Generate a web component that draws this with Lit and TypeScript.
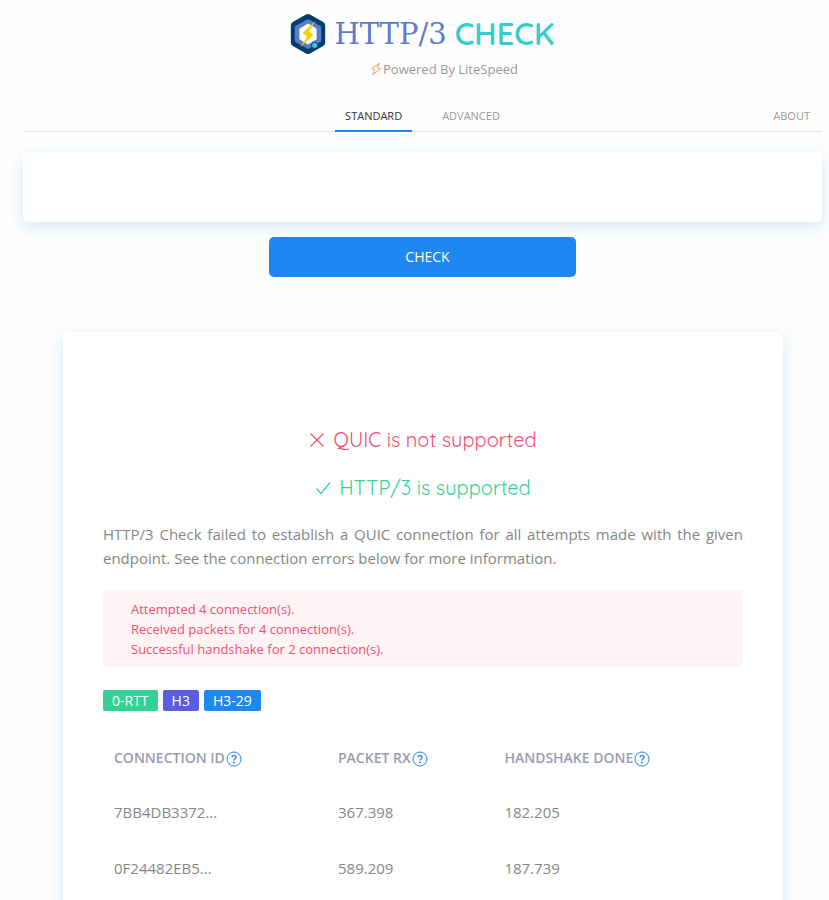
import { LitElement, html, css, svg } from "lit";
import { customElement, state } from "lit/decorators.js";

interface Connection {
  id: string;
  packetRx: string;
  handshake: string;
}

const COLUMNS = ["Connection ID", "Packet RX", "Handshake Done"];

const CONNECTIONS: Connection[] = [
  { id: "7BB4DB3372...", packetRx: "367.398", handshake: "182.205" },
  { id: "0F24482EB5...", packetRx: "589.209", handshake: "187.739" },
];

const logo = svg`
  <svg class="logo" viewBox="0 0 36 40" aria-hidden="true">
    <path fill="#003e6b" d="M16 .6q2-1 4 0l13.200 7.400q2 1.200 2 3.400v17.200q0 2.200-2 3.400l-13.200 7.400q-2 1-4 0l-13.200-7.400q-2-1.200-2-3.400v-17.200q0-2.200 2-3.400z"/>
    <path fill="#5c7ccb" d="M17 5.500q1-.6 2 0l11 6.200q1.200.7 1.200 2v12.600q0 1.300-1.200 2l-11 6.200q-1 .6-2 0l-11-6.200q-1.200-.7-1.200-2v-12.600q0-1.300 1.200-2z"/>
    <path fill="#fff" d="M18 9.500l8.600 5.200v10.600l-8.600 5.200l-8.600-5.200v-10.600z"/>
    <path fill="#fc0" d="M25.500 6.800L12.500 19.200l4.600 3.200L10.200 33.200l13.400-12.400l-4.600-3.200z"/>
    <circle cx="24.700" cy="31.300" r="3.200" fill="#34cdce" stroke="#003e6b"/>
  </svg>`;

const bolt = svg`
  <svg class="bolt" viewBox="0 0 12 14" aria-hidden="true">
    <path d="M9.500 1.200L1.500 7L4.800 8L2.500 12.800L10.500 6.800L7.200 5.800z" />
  </svg>`;

@customElement("app-root")
export class AppRoot extends LitElement {
  @state() private host = "";

  static styles = css`
    :host {
      display: block;
      min-height: 100vh;
      box-sizing: border-box;
      padding: 12px 7px 0 23px;
      background: #fefefe;
      color: #868686;
      font-family: "Open Sans", "Noto Sans", sans-serif;
      font-size: 15px;
      line-height: 24px;
    }
    * {
      box-sizing: border-box;
    }
    a {
      color: inherit;
      text-decoration: none;
    }
    .brand {
      display: flex;
      justify-content: center;
      align-items: center;
      gap: 8px;
      margin: 0;
      height: 44px;
      font-weight: 400;
      line-height: 44px;
    }
    .logo {
      width: 36px;
      height: 40px;
    }
    .http {
      color: #5c7ccb;
      font-family: "DejaVu Serif", serif;
      font-size: 29px;
    }
    .check-word {
      color: #34cdce;
      font-family: Quicksand, Lato, sans-serif;
      font-size: 31px;
      font-weight: 600;
    }
    .powered {
      display: flex;
      justify-content: center;
      align-items: center;
      margin: 1px 0 0;
      padding: 0 0 0 43px;
      font-size: 13px;
      color: #999;
    }
    .powered a {
      display: flex;
      align-items: center;
      gap: 1px;
    }
    .bolt {
      width: 12px;
      height: 14px;
      fill: none;
      stroke: #ff9b6a;
      stroke-width: 1;
      stroke-linejoin: round;
    }
    .tabs {
      display: grid;
      grid-template-columns: 1fr auto 1fr;
      margin-top: 18px;
      border-bottom: 1px solid #d3e5ef;
      font-size: 11px;
      line-height: 34px;
      color: #999;
    }
    .views {
      grid-column: 2;
      display: flex;
      gap: 20px;
    }
    .tab,
    .about {
      height: 32px;
      padding: 0 10px;
    }
    .tab.current {
      height: 33px;
      margin-bottom: -1px;
      color: #333;
      border-bottom: 2px solid #1e87f0;
    }
    .about {
      justify-self: end;
      padding: 0 12px;
    }
    .search {
      display: flex;
      flex-direction: column;
      align-items: center;
      gap: 15px;
      margin-top: 20px;
    }
    .field {
      width: 100%;
      padding: 15px 20px;
      background: #fff;
      border-radius: 5px;
      box-shadow: 0 5px 15px rgba(20, 130, 190, 0.18);
    }
    .host {
      display: block;
      width: 100%;
      height: 40px;
      border: 0;
      outline: 0;
      background: transparent;
      font: inherit;
      color: inherit;
      text-align: center;
    }
    .submit {
      width: 307px;
      max-width: 100%;
      height: 40px;
      padding: 0 0 0 10px;
      border: 0;
      border-radius: 5px;
      background: #1e87f0;
      color: #fff;
      font: inherit;
      font-size: 14px;
    }
    .result {
      margin: 55px 39px 0 40px;
      padding: 94px 40px 40px;
      background: #fff;
      border-radius: 5px;
      box-shadow: 0 5px 15px rgba(20, 130, 190, 0.18);
    }
    .status {
      display: flex;
      justify-content: center;
      align-items: center;
      gap: 8px;
      margin: 0 0 20px;
      font-family: Quicksand, Lato, sans-serif;
      font-size: 20px;
      font-weight: 400;
      line-height: 28px;
      height: 28px;
    }
    .mark {
      width: 16px;
      height: 16px;
      fill: none;
      stroke: currentColor;
      stroke-width: 1.2;
    }
    .bad {
      color: #f0506e;
    }
    .good {
      color: #32d296;
    }
    .note {
      margin: 0;
      text-align: justify;
    }
    .errors {
      list-style: none;
      margin: 20px 0 23px;
      padding: 9px 28px 8px;
      border-radius: 4px;
      background: #fef4f6;
      color: #f0506e;
      font-size: 13px;
      line-height: 20px;
    }
    .labels {
      display: flex;
      gap: 5px;
      font-size: 14px;
      line-height: 21px;
      color: #fff;
    }
    .label {
      padding: 0 9px;
      border-radius: 2px;
    }
    .green {
      background: #32d296;
    }
    .purple {
      background: #5c5cde;
    }
    .blue {
      background: #1e87f0;
    }
    table {
      width: 100%;
      margin-top: 19px;
      border-collapse: collapse;
      table-layout: fixed;
    }
    .col-id {
      width: 35%;
    }
    .col-rx {
      width: 26%;
    }
    th,
    td {
      padding: 16px 11px;
      text-align: left;
    }
    th {
      padding-bottom: 14px;
      color: #9a9ab5;
      font-size: 14px;
      font-weight: 600;
      text-transform: uppercase;
    }
    .heading {
      display: flex;
      align-items: center;
      gap: 1px;
    }
    .help {
      display: flex;
      padding: 2px 0 0;
      border: 0;
      background: none;
      color: #1e87f0;
    }
    .help svg {
      width: 16px;
      height: 16px;
      fill: none;
      stroke: currentColor;
    }
    .help .hook {
      stroke-width: 1.4;
    }
    .help .dot {
      fill: currentColor;
      stroke: none;
    }
  `;

  private onInput(e: Event) {
    this.host = (e.target as HTMLInputElement).value;
  }

  render() {
    return html`
      <header>
        <h1 class="brand">
          ${logo}
          <span class="http">HTTP/3</span>
          <span class="check-word">CHECK</span>
        </h1>
        <p class="powered"><a href="#litespeed">${bolt}<span>Powered By LiteSpeed</span></a></p>
      </header>
      <nav class="tabs">
        <div class="views">
          <a class="tab current" href="#standard">STANDARD</a>
          <a class="tab" href="#advanced">ADVANCED</a>
        </div>
        <a class="about" href="#about">ABOUT</a>
      </nav>
      <main>
        <form class="search" @submit=${(e: Event) => e.preventDefault()}>
          <div class="field">
            <input class="host" type="text" aria-label="Host" .value=${this.host} @input=${this.onInput} />
          </div>
          <button class="submit" type="submit">CHECK</button>
        </form>
        <section class="result">
          <h2 class="status bad">
            <svg class="mark" viewBox="0 0 16 16" aria-hidden="true"><path d="M1.500 1.500l13 13M14.500 1.500l-13 13" /></svg>
            <span>QUIC is not supported</span>
          </h2>
          <h2 class="status good">
            <svg class="mark" viewBox="0 0 16 16" aria-hidden="true"><path d="M1.500 8.500l4.500 5L15 2.500" /></svg>
            <span>HTTP/3 is supported</span>
          </h2>
          <p class="note">
            HTTP/3 Check failed to establish a QUIC connection for all attempts made with the given endpoint. See the
            connection errors below for more information.
          </p>
          <ul class="errors">
            <li>Attempted 4 connection(s).</li>
            <li>Received packets for 4 connection(s).</li>
            <li>Successful handshake for 2 connection(s).</li>
          </ul>
          <div class="labels">
            <span class="label green">0-RTT</span>
            <span class="label purple">H3</span>
            <span class="label blue">H3-29</span>
          </div>
          <table>
            <colgroup>
              <col class="col-id" />
              <col class="col-rx" />
              <col />
            </colgroup>
            <thead>
              <tr>
                ${COLUMNS.map(
                  (name) => html`<th scope="col">
                    <div class="heading">
                      <span>${name}</span>
                      <button class="help" type="button" aria-label="About ${name}">
                        <svg viewBox="0 0 16 16" aria-hidden="true">
                          <circle cx="8" cy="8" r="7" />
                          <path class="hook" d="M6 6.300C6 4 10 4 10 6.300C10 7.700 8 7.800 8 9.600" />
                          <circle class="dot" cx="8" cy="11.500" r="1" />
                        </svg>
                      </button>
                    </div>
                  </th>`,
                )}
              </tr>
            </thead>
            <tbody>
              ${CONNECTIONS.map(
                (c) => html`<tr>
                  <td>${c.id}</td>
                  <td>${c.packetRx}</td>
                  <td>${c.handshake}</td>
                </tr>`,
              )}
            </tbody>
          </table>
        </section>
      </main>
    `;
  }
}
